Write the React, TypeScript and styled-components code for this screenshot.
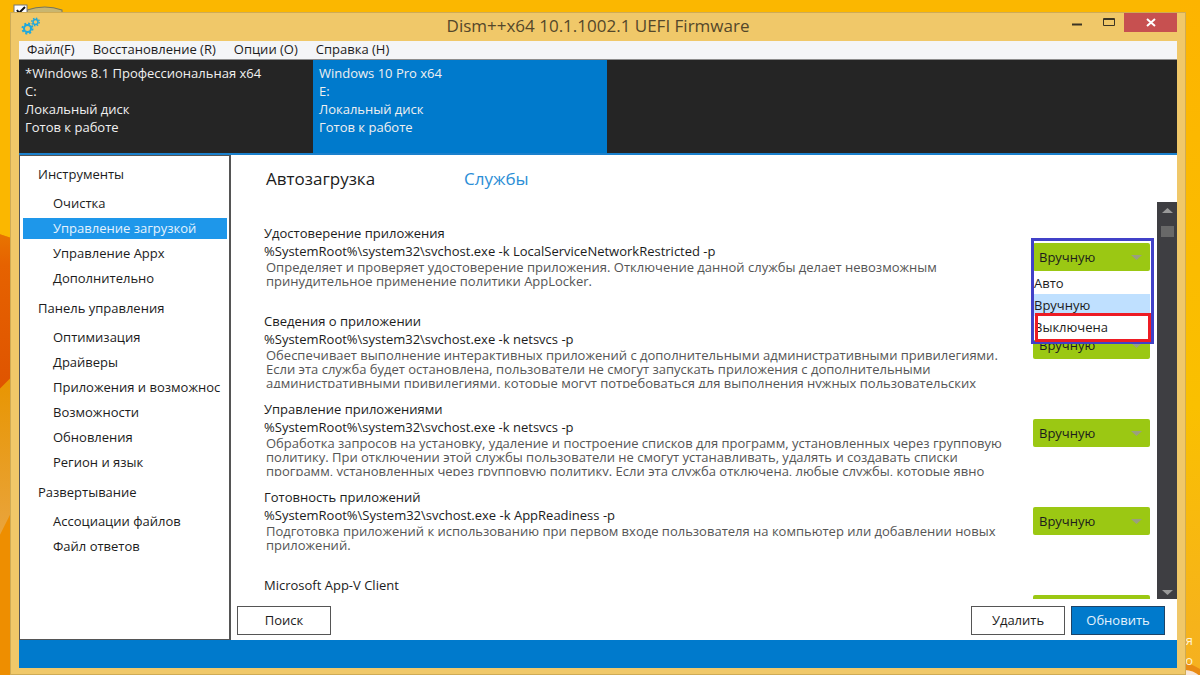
import React, { useState } from "react";
import styled, { createGlobalStyle } from "styled-components";

const Global = createGlobalStyle`
  * { box-sizing: border-box; }
  html, body { margin: 0; }
  body { font: 13px/18px "Open Sans", "Noto Sans", sans-serif; color: #1c1c1c; }
  button, select { font: inherit; color: inherit; }
  h2, p { margin: 0; font: inherit; }
`;

const Desktop = styled.div`
  position: relative;
  display: flex;
  min-height: 100vh;
  overflow: hidden;
  padding: 12px 14px 1px 10px;
  background: #fbb700;
`;

const Wallpaper = styled.svg`
  position: absolute;
  inset: 0;
  width: 100%;
  height: 100%;
`;

const DesktopLabel = styled.div`
  position: absolute;
  right: 7px;
  bottom: 6px;
  width: 12px;
  overflow: hidden;
  direction: rtl;
  line-height: 20px;
  color: #fdf3d8;
`;

const Window = styled.div`
  position: relative;
  flex: 1;
  min-width: 0;
  display: flex;
  flex-direction: column;
  padding: 0 8px 6px;
  background: #f0c869;
  border: 1px solid #cfab55;
`;

const TitleBar = styled.header`
  display: grid;
  grid-template-columns: 1fr auto 1fr;
  height: 28px;
`;

const AppIcon = styled.svg`
  width: 22px;
  height: 20px;
  margin: 4px 0 0 1px;
`;

const Title = styled.h1`
  margin: 0;
  font-size: 17px;
  font-weight: 400;
  line-height: 26px;
  color: #54472a;
`;

const WindowButtons = styled.div`
  display: flex;
  justify-content: flex-end;
`;

const WindowButton = styled.button<{ $close?: boolean }>`
  width: ${(p) => (p.$close ? 53 : 32)}px;
  height: 19px;
  padding: 0;
  border: 0;
  background: ${(p) => (p.$close ? "#c75050" : "transparent")};
  svg { display: block; margin: 0 auto; }
`;

const Client = styled.div`
  flex: 1;
  display: flex;
  flex-direction: column;
  background: #fff;
`;

const MenuBar = styled.nav`
  display: flex;
  align-items: flex-start;
  gap: 18px;
  height: 19px;
  padding: 0 8px;
  background: #f4f5f7;
  border-bottom: 1px solid #8d8d8d;
`;

const MenuItem = styled.button`
  padding: 0;
  border: 0;
  background: none;
  line-height: 16px;
`;

const Systems = styled.div`
  display: flex;
  height: 95px;
  background: #252525;
  border-bottom: 2px solid #1a80cc;
`;

const System = styled.button<{ $active?: boolean }>`
  width: 294px;
  padding: 4px 6px;
  border: 0;
  display: flex;
  flex-direction: column;
  text-align: left;
  line-height: 18px;
  color: #f0f0f0;
  background: ${(p) => (p.$active ? "#007acc" : "transparent")};
`;

const Body = styled.div`
  flex: 1;
  display: flex;
`;

const Sidebar = styled.nav`
  width: 212px;
  padding: 5px 2px 5px 3px;
  border: 1px solid #555;
  border-right-width: 2px;
`;

const Group = styled.h2`
  padding: 4px 15px 6px;
  line-height: 18px;
`;

const Links = styled.div`
  display: flex;
  flex-direction: column;
  gap: 4px;
  padding: 4px 0 6px;
`;

const SideLink = styled.a<{ $active?: boolean }>`
  padding-left: 30px;
  line-height: 21px;
  white-space: nowrap;
  overflow: hidden;
  text-decoration: none;
  color: ${(p) => (p.$active ? "#e4f2fd" : "#1c1c1c")};
  background: ${(p) => (p.$active ? "#1e97ea" : "transparent")};
`;

const Main = styled.main`
  flex: 1;
  min-width: 0;
  display: flex;
  flex-direction: column;
`;

const Tabs = styled.div`
  display: flex;
  height: 47px;
  padding: 11px 35px 0;
`;

const Tab = styled.button<{ $link?: boolean }>`
  width: 198px;
  height: 26px;
  padding: 0;
  border: 0;
  background: none;
  text-align: left;
  font-size: 17px;
  line-height: 26px;
  color: ${(p) => (p.$link ? "#2b8ed6" : "#1c1c1c")};
`;

const ListFrame = styled.div`
  flex: 1;
  display: flex;
  min-height: 0;
`;

const List = styled.div`
  flex: 1 1 0;
  min-width: 0;
  height: 397px;
  padding: 22px 7px 0 33px;
  overflow: hidden;
`;

const Service = styled.section`
  display: grid;
  grid-template-columns: minmax(0, 1fr) 117px;
  column-gap: 9px;
  height: 88px;
`;

const Line = styled.p`
  white-space: nowrap;
  line-height: 18px;
`;

const Description = styled.p`
  height: 40px;
  padding-left: 2px;
  overflow: hidden;
  line-height: 14px;
  white-space: pre;
  color: #555;
`;

const Picker = styled.div`
  position: relative;
  height: 28px;
  margin-top: 19px;
`;

const Select = styled.select`
  appearance: none;
  width: 100%;
  height: 28px;
  padding: 0 6px;
  border: 0;
  border-radius: 2px;
  background: #9bc813;
`;

const Arrow = styled.svg`
  position: absolute;
  right: 8px;
  top: 12px;
  pointer-events: none;
`;

const Menu = styled.div`
  position: absolute;
  z-index: 2;
  top: -5px;
  left: -2px;
  right: -4px;
  padding: 31px 1px 0 0;
  height: 106px;
  border: 3px solid #4141c8;
  pointer-events: none;
`;

const Option = styled.div<{ $selected?: boolean; $marked?: boolean }>`
  position: relative;
  height: ${(p) => (p.$marked ? 24 : 22)}px;
  line-height: 22px;
  background: ${(p) => (p.$selected ? "#bfe0ff" : "#fff")};
  &::after {
    content: "";
    display: ${(p) => (p.$marked ? "block" : "none")};
    position: absolute;
    inset: -3px -1px -2px 1px;
    border: 3px solid #ed1c24;
  }
`;

const ScrollBar = styled.div`
  display: flex;
  flex-direction: column;
  align-items: center;
  width: 20px;
  height: 397px;
  padding: 6px 0 4px;
  background: #3e3e42;
`;

const Thumb = styled.div`
  width: 13px;
  height: 11px;
  margin: 13px 0 auto;
  background: #686868;
`;

const Actions = styled.footer`
  display: flex;
  align-items: flex-start;
  gap: 6px;
  padding: 7px 12px 5px 6px;
`;

const Action = styled.button<{ $primary?: boolean; $first?: boolean }>`
  width: 94px;
  height: 29px;
  margin-right: ${(p) => (p.$first ? "auto" : 0)};
  padding: 0 0 2px;
  border: 1px solid ${(p) => (p.$primary ? "#1d4468" : "#555")};
  background: ${(p) => (p.$primary ? "#007acc" : "#fff")};
  color: ${(p) => (p.$primary ? "#e4f2fd" : "#1c1c1c")};
`;

const StatusBar = styled.div`
  height: 28px;
  background: #007acc;
`;

const systems = [
  ["*Windows 8.1 Профессиональная x64", "C:", "Локальный диск", "Готов к работе"],
  ["Windows 10 Pro x64", "E:", "Локальный диск", "Готов к работе"],
];

const groups = [
  { name: "Инструменты", items: ["Очистка", "Управление загрузкой", "Управление Appx", "Дополнительно"] },
  {
    name: "Панель управления",
    items: ["Оптимизация", "Драйверы", "Приложения и возможнос", "Возможности", "Обновления", "Регион и язык"],
  },
  { name: "Развертывание", items: ["Ассоциации файлов", "Файл ответов"] },
];

const services = [
  {
    name: "Удостоверение приложения",
    command: "%SystemRoot%\\system32\\svchost.exe -k LocalServiceNetworkRestricted -p",
    text: "Определяет и проверяет удостоверение приложения. Отключение данной службы делает невозможным\nпринудительное применение политики AppLocker.",
  },
  {
    name: "Сведения о приложении",
    command: "%SystemRoot%\\system32\\svchost.exe -k netsvcs -p",
    text: "Обеспечивает выполнение интерактивных приложений с дополнительными административными привилегиями.\nЕсли эта служба будет остановлена, пользователи не смогут запускать приложения с дополнительными\nадминистративными привилегиями, которые могут потребоваться для выполнения нужных пользовательских",
  },
  {
    name: "Управление приложениями",
    command: "%SystemRoot%\\system32\\svchost.exe -k netsvcs -p",
    text: "Обработка запросов на установку, удаление и построение списков для программ, установленных через групповую\nполитику. При отключении этой службы пользователи не смогут устанавливать, удалять и создавать списки\nпрограмм, установленных через групповую политику. Если эта служба отключена, любые службы, которые явно",
  },
  {
    name: "Готовность приложений",
    command: "%SystemRoot%\\System32\\svchost.exe -k AppReadiness -p",
    text: "Подготовка приложений к использованию при первом входе пользователя на компьютер или добавлении новых\nприложений.",
  },
  { name: "Microsoft App-V Client", command: "", text: "" },
];

const modes = ["Авто", "Вручную", "Выключена"];

function ServiceRow({ name, command, text, open }: { name: string; command: string; text: string; open?: boolean }) {
  const [mode, setMode] = useState("Вручную");
  return (
    <Service>
      <div>
        <Line>{name}</Line>
        <Line>{command}</Line>
        <Description>{text}</Description>
      </div>
      <Picker>
        <Select aria-label={name} value={mode} onChange={(e) => setMode(e.target.value)}>
          {modes.map((m) => (
            <option key={m}>{m}</option>
          ))}
        </Select>
        <Arrow width="11" height="6">
          <path d="M0 0H11L5.500 5Z" fill="#9a9f80" />
        </Arrow>
        {open && (
          <Menu>
            {modes.map((m) => (
              <Option key={m} $selected={m === mode} $marked={m === "Выключена"}>
                {m}
              </Option>
            ))}
          </Menu>
        )}
      </Picker>
    </Service>
  );
}

export default function App() {
  return (
    <Desktop>
      <Global />
      <Wallpaper viewBox="0 0 1200 675" preserveAspectRatio="none" aria-hidden="true">
        <defs>
          <linearGradient id="right" x1="0" y1="0" x2="0" y2="1">
            <stop offset="0" stopColor="#fdb400" />
            <stop offset="0.6" stopColor="#fac000" />
            <stop offset="1" stopColor="#f5b021" />
          </linearGradient>
          <linearGradient id="left" x1="0" y1="0" x2="0" y2="1">
            <stop offset="0" stopColor="#e87400" />
            <stop offset="0.2" stopColor="#e66200" />
            <stop offset="1" stopColor="#df5400" />
          </linearGradient>
          <linearGradient id="haze" x1="0" y1="0" x2="0" y2="1">
            <stop offset="0" stopColor="#e89500" />
            <stop offset="1" stopColor="#e9a43c" />
          </linearGradient>
        </defs>
        <path d="M1180 0H1200V675H1180Z" fill="url(#right)" />
        <path d="M0 234L12 238V675H0Z" fill="#ee8e00" />
        <path d="M0 388L12 376V510L0 534Z" fill="url(#haze)" />
        <path d="M0 234L12 238V376L0 388Z" fill="url(#left)" />
        <path d="M1185 660L1200 668V675H1185Z" fill="#e98b13" />
        <path d="M1185 669Q1193 669 1200 675H1185Z" fill="#f8e6d8" />
        <path d="M27 10Q45 4 62 10V14H27Z" fill="#c9b670" stroke="#77765c" />
        <path d="M14 5H27V14H14Z" fill="#fff" stroke="#777" />
        <path d="M17 10L19 13L25 7" fill="none" stroke="#111" strokeWidth="2" />
      </Wallpaper>
      <DesktopLabel>
        <div>я</div>
        <div>о</div>
      </DesktopLabel>
      <Window>
        <TitleBar>
          <AppIcon viewBox="0 0 22 20" fill="none" stroke="#1fa8dc">
            <circle cx="7.500" cy="11.500" r="3.500" strokeWidth="2" />
            <circle cx="7.500" cy="11.500" r="5" strokeWidth="2" strokeDasharray="2 1.930" />
            <circle cx="15.500" cy="5" r="2.500" strokeWidth="1.500" />
            <circle cx="15.500" cy="5" r="3.800" strokeWidth="1.300" strokeDasharray="1.500 1.480" />
          </AppIcon>
          <Title>Dism++x64 10.1.1002.1 UEFI Firmware</Title>
          <WindowButtons>
            <WindowButton aria-label="Свернуть">
              <svg width="32" height="19"><path d="M12 11.500H22" stroke="#3c3524" strokeWidth="2" /></svg>
            </WindowButton>
            <WindowButton aria-label="Развернуть">
              <svg width="32" height="19"><path d="M11.500 5.500H22.500V12.500H11.500ZM11 6.500H23" fill="none" stroke="#3c3524" /></svg>
            </WindowButton>
            <WindowButton $close aria-label="Закрыть">
              <svg width="53" height="19"><path d="M23 6L31 13M31 6L23 13" stroke="#fff" strokeWidth="2" /></svg>
            </WindowButton>
          </WindowButtons>
        </TitleBar>
        <Client>
          <MenuBar>
            {["Файл(F)", "Восстановление (R)", "Опции (O)", "Справка (H)"].map((m) => (
              <MenuItem key={m}>{m}</MenuItem>
            ))}
          </MenuBar>
          <Systems>
            {systems.map((lines, i) => (
              <System key={lines[0]} $active={i === 1}>
                {lines.map((l) => (
                  <span key={l}>{l}</span>
                ))}
              </System>
            ))}
          </Systems>
          <Body>
            <Sidebar>
              {groups.map((g) => (
                <React.Fragment key={g.name}>
                  <Group>{g.name}</Group>
                  <Links>
                    {g.items.map((item) => (
                      <SideLink key={item} href="#" $active={item === "Управление загрузкой"}>
                        {item}
                      </SideLink>
                    ))}
                  </Links>
                </React.Fragment>
              ))}
            </Sidebar>
            <Main>
              <Tabs>
                <Tab>Автозагрузка</Tab>
                <Tab $link>Службы</Tab>
              </Tabs>
              <ListFrame>
                <List>
                  {services.map((s, i) => (
                    <ServiceRow key={s.name} {...s} open={i === 0} />
                  ))}
                </List>
                <ScrollBar>
                  <svg width="11" height="5"><path d="M0 5L5.500 0L11 5Z" fill="#999" /></svg>
                  <Thumb />
                  <svg width="11" height="5"><path d="M0 0H11L5.500 5Z" fill="#999" /></svg>
                </ScrollBar>
              </ListFrame>
              <Actions>
                <Action $first>Поиск</Action>
                <Action>Удалить</Action>
                <Action $primary>Обновить</Action>
              </Actions>
            </Main>
          </Body>
          <StatusBar />
        </Client>
      </Window>
    </Desktop>
  );
}
